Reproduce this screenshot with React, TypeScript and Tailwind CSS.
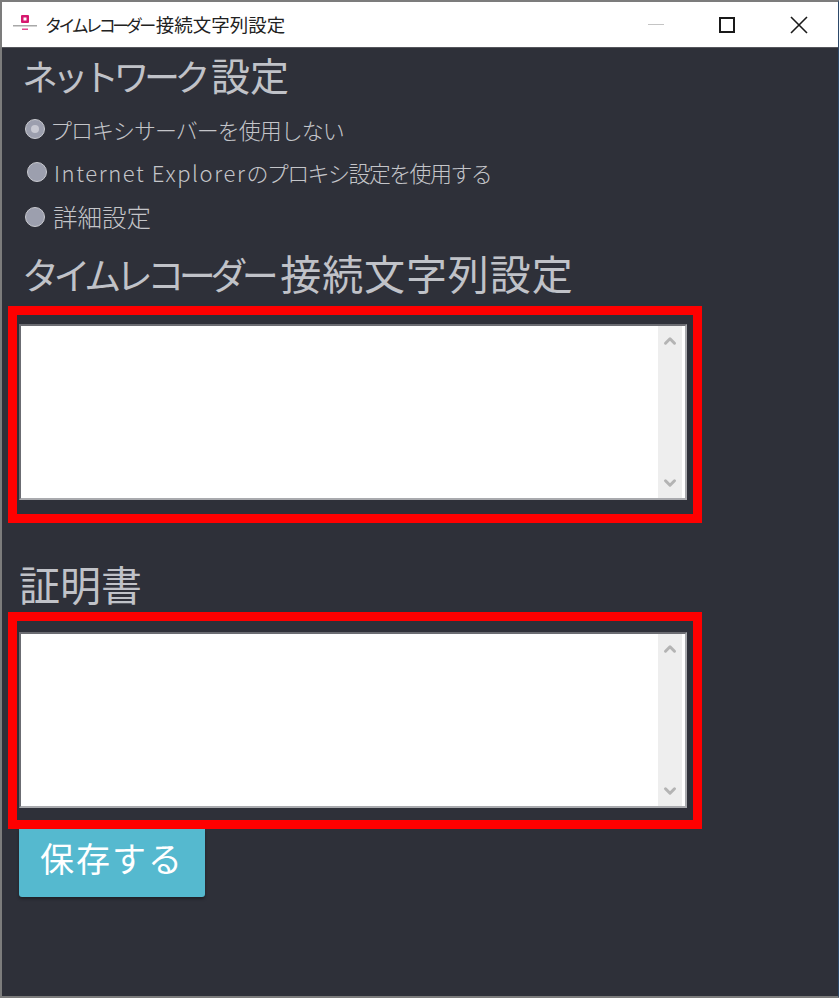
import type { ReactNode } from "react";
import { ChevronDown, ChevronUp } from "lucide-react";

const font = "font-['Noto_Sans_CJK_JP','Noto_Sans',sans-serif]";

function Radio({ children, checked, className, labelClass }: { children: ReactNode; checked?: boolean; className: string; labelClass: string }) {
  return (
    <div className={`flex items-center h-[24px] text-[#c4c5c9] text-[22px] font-light ${className}`}>
      <span className="w-[20px] h-[20px] rounded-full bg-[#9c9fae] border border-[#c9cad0] flex items-center justify-center shrink-0">
        {checked && <span className="w-[8px] h-[8px] rounded-full bg-[#c8c9d2]" />}
      </span>
      <span className={`whitespace-nowrap ${labelClass}`}>{children}</span>
    </div>
  );
}

function BoxedArea({ top }: { top: string }) {
  return (
    <div className="w-[694px] h-[217px] border-[9px] border-[#ff0000] ml-[6px]">
      <div className={`ml-[2px] w-[668px] h-[176px] bg-white border-[2px] border-[#6b6c72] border-b-[#a9aaae] border-r-[#a9aaae] flex justify-end ${top}`}>
        <div className="w-[24px] mr-[3px] bg-[#eeeeee] flex flex-col justify-between items-center py-[6px]">
          <ChevronUp className="w-[18px] h-[18px] text-[#b4b4b4]" strokeWidth={4} />
          <ChevronDown className="w-[18px] h-[18px] text-[#b4b4b4]" strokeWidth={4} />
        </div>
      </div>
    </div>
  );
}

export default function App() {
  return (
    <div className={`w-[839px] h-[998px] flex flex-col bg-[#2e3039] border-l-2 border-t-2 border-b-2 border-r border-l-[#7c7c7c] border-t-[#7c7c7c] border-b-[#7c7c7c] border-r-[#2d4a6b] overflow-hidden ${font}`}>
      {/* title bar */}
      <div className="h-[46px] bg-white border-b border-[#55565c] flex items-center shrink-0">
        <svg width="26" height="20" viewBox="0 0 26 20" className="ml-[10px] shrink-0">
          <rect x="9" y="0" width="8" height="8" rx="1" fill="#d6186e" />
          <rect x="11.5" y="2.5" width="3" height="3" fill="#fff" />
          <rect x="1" y="10" width="24" height="1.5" fill="#a8a8a8" />
          <rect x="10" y="13.5" width="6" height="1.5" fill="#e04a90" />
        </svg>
        <span className="ml-[7px] text-[17px] text-[#222] whitespace-nowrap">
          <span className="tracking-[-3.5px]">タイムレコーダー</span>
          <span className="ml-[3px] text-[18.5px]">接続文字列設定</span>
        </span>
        <div className="ml-auto flex items-center">
          <span className="w-[16px] h-[1px] bg-[#c4c4c4]" />
          <span className="ml-[55px] w-[16px] h-[16px] border-[2px] border-[#1a1a1a]" />
          <svg width="18" height="18" viewBox="0 0 18 18" className="ml-[55px] mr-[30px]">
            <path d="M1 1 L17 17 M17 1 L1 17" stroke="#1a1a1a" strokeWidth="1.6" fill="none" />
          </svg>
        </div>
      </div>

      <h2 className="ml-[20px] h-[52px] leading-[52px] text-[36px] font-normal text-[#c0c2c8] whitespace-nowrap">
        <span className="tracking-[-5.5px]">ネットワーク</span>
        <span className="ml-[6px] text-[39px]">設定</span>
      </h2>
      <Radio checked className="ml-[23px] mt-[17px]" labelClass="ml-[5px] tracking-[-1px]">プロキシサーバーを使用しない</Radio>
      <Radio className="ml-[25px] mt-[19px]" labelClass="ml-[7px] tracking-[-1.6px]">
        <span className="tracking-[1.6px]">Internet Explorer</span>のプロキシ設定を使用する
      </Radio>
      <Radio className="ml-[23px] mt-[21px]" labelClass="ml-[8px] text-[24.5px]">詳細設定</Radio>
      <h2 className="ml-[20px] mt-[17px] h-[52px] leading-[52px] text-[37px] font-normal text-[#c0c2c8] whitespace-nowrap">
        <span className="tracking-[-5.5px]">タイムレコーダー</span>
        <span className="ml-[7px] text-[41px] tracking-[0.9px]">接続文字列設定</span>
      </h2>
      <div className="mt-[8px]"><BoxedArea top="mt-[9px]" /></div>
      <h2 className="ml-[17px] mt-[34px] h-[52px] leading-[52px] text-[41px] font-normal text-[#c0c2c8] whitespace-nowrap">証明書</h2>
      <div className="mt-[3px]"><BoxedArea top="mt-[11px]" /></div>
      <button className="ml-[17px] pb-[12px] w-[186px] h-[68px] bg-[#55b9cf] rounded-b-[3px] shadow-[0_2px_3px_rgba(0,0,0,0.35)] text-white text-[34px] tracking-[2px] flex items-center justify-center">保存する</button>
    </div>
  );
}
